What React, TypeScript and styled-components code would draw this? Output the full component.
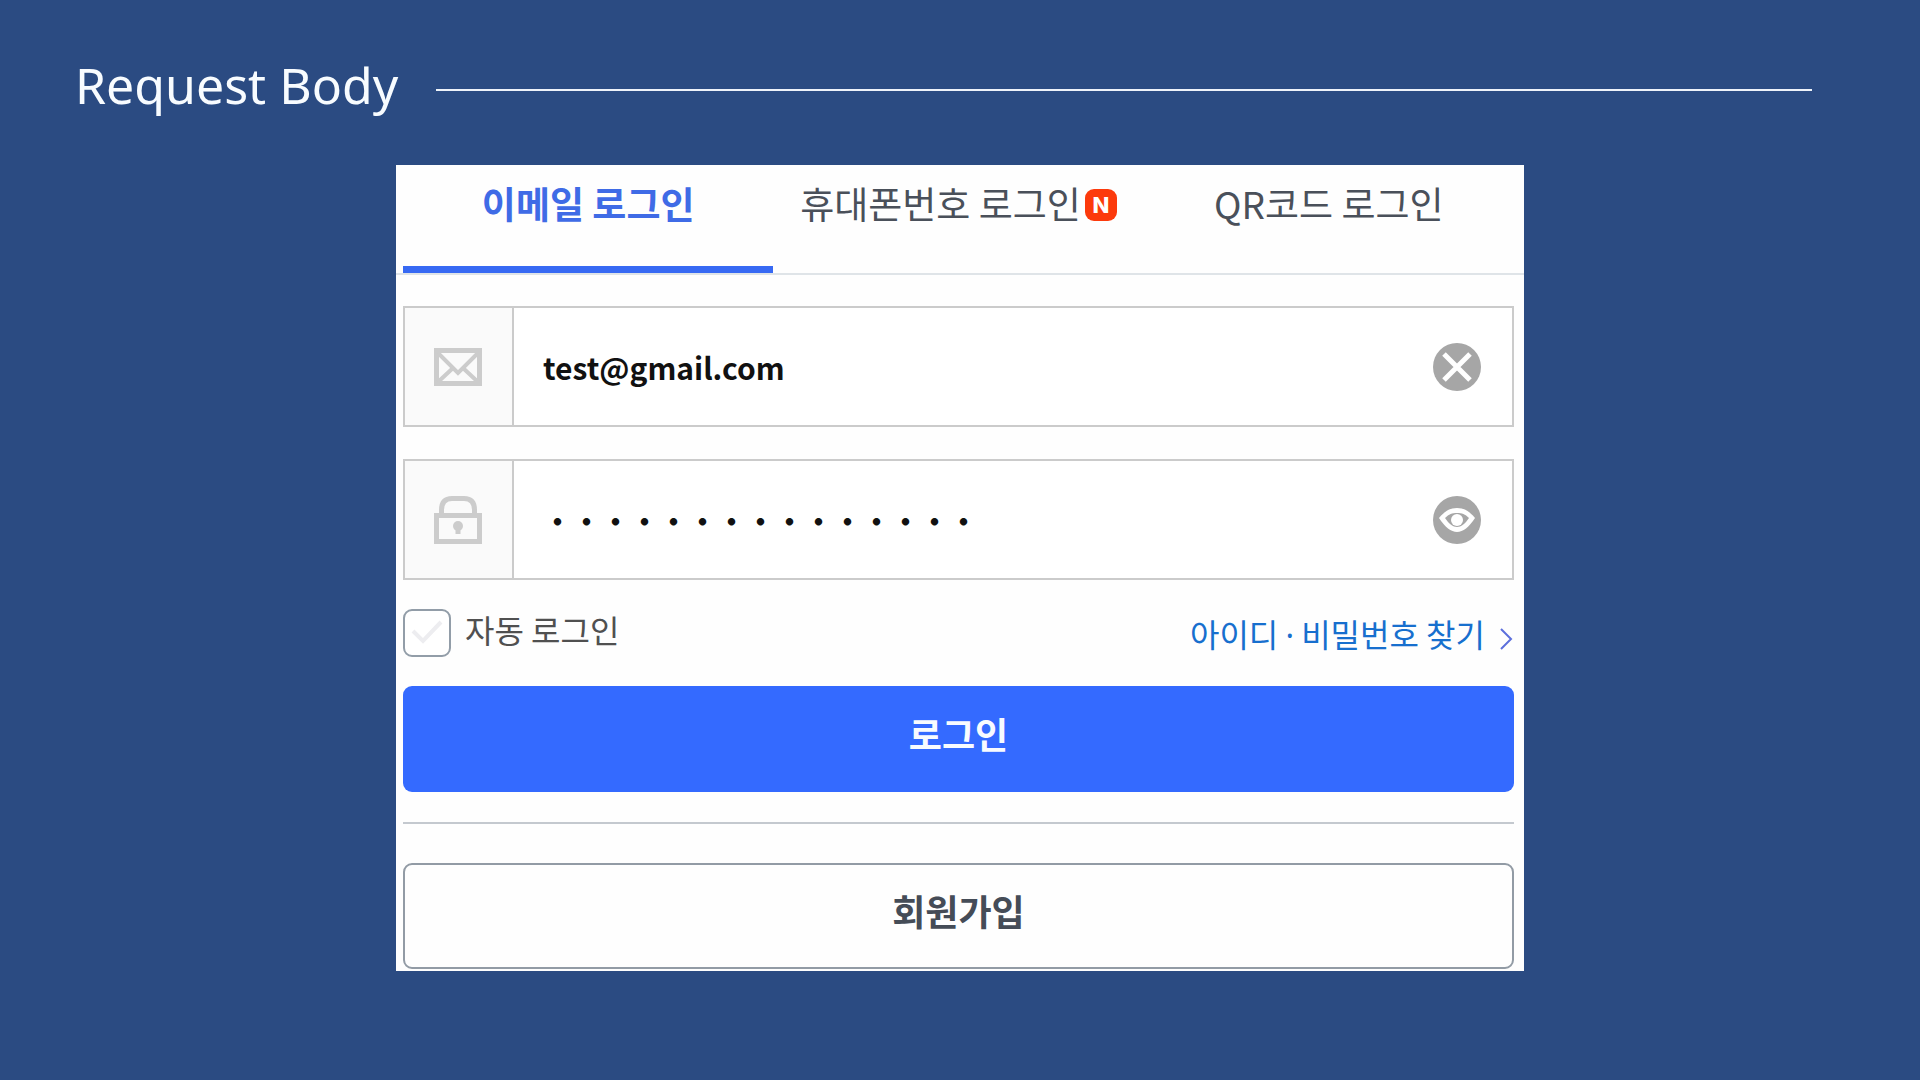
import React, { useState } from "react";
import styled, { createGlobalStyle } from "styled-components";

const GlobalStyle = createGlobalStyle`
  *, *::before, *::after { box-sizing: border-box; }
  body {
    margin: 0;
    background: #2b4b82;
    font-family: "Noto Sans CJK KR", "Noto Sans", sans-serif;
  }
  button, input { font: inherit; }
`;

const Slide = styled.main`
  min-height: 100vh;
  padding-bottom: 108px;
  background: #2b4b82;
`;

const SlideHeader = styled.header`
  display: flex;
  align-items: center;
  gap: 38px;
  padding: 50px 108px 35px 75px;
`;

const Title = styled.h1`
  margin: 0;
  padding-bottom: 10px;
  color: #f8fcff;
  font-family: "Noto Sans", "Open Sans", sans-serif;
  font-size: 50px;
  font-weight: 400;
  line-height: 70px;
  white-space: nowrap;
`;

const TitleRule = styled.hr`
  flex: 1;
  height: 2px;
  margin: 0;
  border: 0;
  background: #eef3fa;
`;

const Card = styled.section`
  width: min(1128px, 100%);
  margin: 0 auto;
  padding-bottom: 2px;
  background: #fefefe;
`;

const Tabs = styled.nav`
  display: grid;
  grid-template-columns: repeat(3, 1fr);
  padding: 0 10px 0 7px;
  border-bottom: 2px solid #dfe4e8;
`;

const Tab = styled.button<{ $active?: boolean }>`
  display: flex;
  align-items: center;
  justify-content: center;
  gap: 4px;
  padding: 0 0 25px;
  border: 0;
  border-bottom: 7px solid ${(p) => (p.$active ? "#3769f3" : "transparent")};
  background: none;
  color: ${(p) => (p.$active ? "#3f6be6" : "#4a505a")};
  font-size: 37px;
  font-weight: ${(p) => (p.$active ? 700 : 400)};
  line-height: 76px;
  white-space: nowrap;
  cursor: pointer;
`;

const NewBadge = styled.span`
  display: flex;
  align-items: center;
  justify-content: center;
  width: 32px;
  height: 32px;
  margin-top: 4px;
  border-radius: 9px;
  background: #fc3a0c;
  color: #fff;
  font-family: Inter, sans-serif;
  font-size: 22px;
  font-weight: 800;
  line-height: 32px;
`;

const Form = styled.form`
  display: flex;
  flex-direction: column;
  padding: 31px 10px 0 7px;
`;

const Fields = styled.div`
  display: grid;
  gap: 32px;
`;

const Field = styled.div`
  display: flex;
  height: 121px;
  border: 2px solid #cbcbcb;
  background: #fff;
`;

const FieldIcon = styled.label`
  display: flex;
  align-items: center;
  justify-content: center;
  width: 109px;
  padding-right: 2px;
  border-right: 2px solid #cbcbcb;
  background: #fafafa;
`;

const FieldInput = styled.input`
  flex: 1;
  min-width: 0;
  padding: 0 29px;
  border: 0;
  outline: 0;
  background: transparent;
  color: #111;
  font-size: 30px;
  font-weight: 700;
`;

const MaskedField = styled.div`
  position: relative;
  display: flex;
  flex: 1;
  align-items: center;
  min-width: 0;
`;

const MaskedInput = styled(FieldInput)<{ $masked: boolean }>`
  height: 100%;
  color: ${(p) => (p.$masked ? "transparent" : "#111")};
  caret-color: #111;
`;

const Mask = styled.span`
  position: absolute;
  left: 29px;
  color: #111;
  font-size: 29px;
  font-weight: 700;
  line-height: 40px;
  white-space: nowrap;
  pointer-events: none;
`;

const RoundButton = styled.button`
  display: flex;
  align-items: center;
  padding: 0 31px;
  border: 0;
  background: none;
  cursor: pointer;
`;

const Options = styled.div`
  display: flex;
  align-items: center;
  justify-content: space-between;
  padding: 29px 0;
`;

const Remember = styled.label`
  display: flex;
  align-items: center;
  gap: 14px;
  color: #505050;
  font-size: 32px;
  line-height: 48px;
`;

const RememberText = styled.span`
  padding-bottom: 8px;
  line-height: 40px;
`;

const CheckFrame = styled.span`
  display: grid;
  width: 48px;
  height: 48px;

  > * { grid-area: 1 / 1; }
  svg { pointer-events: none; }
`;

const CheckInput = styled.input`
  appearance: none;
  width: 48px;
  height: 48px;
  margin: 0;
  border: 2px solid #929da8;
  border-radius: 9px;
  background: #fff;

  & + svg { color: #ededf0; }
  &:checked + svg { color: #346aff; }
`;

const FindLink = styled.a`
  display: flex;
  align-items: center;
  gap: 14px;
  color: #176fce;
  font-size: 32px;
  line-height: 48px;
  text-decoration: none;

  svg { margin-top: 12px; }
`;

const MiddleDot = styled.span`
  font-family: "Noto Sans", sans-serif;
  line-height: 1;
`;

const ActionButton = styled.button<{ $primary?: boolean }>`
  height: 106px;
  padding: 0 0 12px;
  border: ${(p) => (p.$primary ? "0" : "2px solid #929ba5")};
  border-radius: 9px;
  background: ${(p) => (p.$primary ? "#346aff" : "#fefefe")};
  color: ${(p) => (p.$primary ? "#f8fbff" : "#454c57")};
  font-size: 36px;
  font-weight: 700;
  cursor: pointer;
`;

const Divider = styled.hr`
  width: 100%;
  height: 2px;
  margin: 30px 0 39px;
  border: 0;
  background: #c4c9cf;
`;

const MailIcon = () => (
  <svg width="48" height="38" viewBox="0 0 48 38" fill="none" stroke="#cccccc" strokeWidth="4" aria-hidden="true">
    <rect x="2.5" y="2.5" width="43" height="33" strokeWidth="5" />
    <path d="M4 5 24 25 44 5M4 34 19 20M44 34 29 20" />
  </svg>
);

const LockIcon = () => (
  <svg width="48" height="48" viewBox="0 0 48 48" fill="none" stroke="#cccccc" strokeWidth="5" aria-hidden="true">
    <rect x="2.5" y="19.5" width="43" height="26" />
    <path d="M7.5 18V14C7.5 6 11 2.5 18 2.5H30C37 2.5 40.5 6 40.5 14V18" />
    <circle cx="24" cy="30" r="5" fill="#cccccc" stroke="none" />
    <path d="M24 30V38" />
  </svg>
);

const ClearIcon = () => (
  <svg width="48" height="48" viewBox="0 0 48 48" aria-hidden="true">
    <circle cx="24" cy="24" r="24" fill="#a6a6a6" />
    <path d="M11 11 37 37M37 11 11 37" stroke="#fff" strokeWidth="5" />
  </svg>
);

const EyeIcon = () => (
  <svg width="48" height="48" viewBox="0 0 48 48" aria-hidden="true">
    <circle cx="24" cy="24" r="24" fill="#a6a6a6" />
    <path d="M6 22C11 16 16 12 24 12S37 16 42 22C36 31 30 36 24 36S12 31 6 22Z" fill="#fff" />
    <path d="M12 22C16 18 19 17 24 17S32 18 36 22C32 28 28 31 24 31S16 28 12 22Z" fill="#a6a6a6" />
    <circle cx="24" cy="24" r="6" fill="#fff" />
  </svg>
);

const CheckIcon = () => (
  <svg width="48" height="48" viewBox="0 0 48 48" fill="none" stroke="currentColor" strokeWidth="4" aria-hidden="true">
    <path d="M10 22 20 32 38 13" />
  </svg>
);

const ChevronIcon = () => (
  <svg width="15" height="22" viewBox="0 0 15 22" fill="none" stroke="#5c6fdc" strokeWidth="2" aria-hidden="true">
    <path d="M2 1 12 11 2 21" />
  </svg>
);

export default function App() {
  const [email, setEmail] = useState("test@gmail.com");
  const [password, setPassword] = useState("password1234567");
  const [visible, setVisible] = useState(false);

  return (
    <>
      <GlobalStyle />
      <Slide>
        <SlideHeader>
          <Title>Request Body</Title>
          <TitleRule />
        </SlideHeader>
        <Card>
          <Tabs>
            <Tab type="button" $active>이메일 로그인</Tab>
            <Tab type="button">
              휴대폰번호 로그인<NewBadge>N</NewBadge>
            </Tab>
            <Tab type="button">QR코드 로그인</Tab>
          </Tabs>
          <Form onSubmit={(e) => e.preventDefault()}>
            <Fields>
              <Field>
                <FieldIcon htmlFor="email" aria-label="이메일"><MailIcon /></FieldIcon>
                <FieldInput id="email" type="text" value={email} onChange={(e) => setEmail(e.target.value)} />
                <RoundButton type="button" aria-label="지우기" onClick={() => setEmail("")}>
                  <ClearIcon />
                </RoundButton>
              </Field>
              <Field>
                <FieldIcon htmlFor="password" aria-label="비밀번호"><LockIcon /></FieldIcon>
                <MaskedField>
                  <MaskedInput
                    id="password"
                    type={visible ? "text" : "password"}
                    $masked={!visible}
                    value={password}
                    onChange={(e) => setPassword(e.target.value)}
                  />
                  {!visible && <Mask aria-hidden="true">{"・".repeat(password.length)}</Mask>}
                </MaskedField>
                <RoundButton type="button" aria-label="비밀번호 표시" onClick={() => setVisible(!visible)}>
                  <EyeIcon />
                </RoundButton>
              </Field>
            </Fields>
            <Options>
              <Remember>
                <CheckFrame>
                  <CheckInput type="checkbox" />
                  <CheckIcon />
                </CheckFrame>
                <RememberText>자동 로그인</RememberText>
              </Remember>
              <FindLink href="#find">
                <span>아이디 <MiddleDot>·</MiddleDot> 비밀번호 찾기</span>
                <ChevronIcon />
              </FindLink>
            </Options>
            <ActionButton type="submit" $primary>로그인</ActionButton>
            <Divider />
            <ActionButton type="button">회원가입</ActionButton>
          </Form>
        </Card>
      </Slide>
    </>
  );
}
